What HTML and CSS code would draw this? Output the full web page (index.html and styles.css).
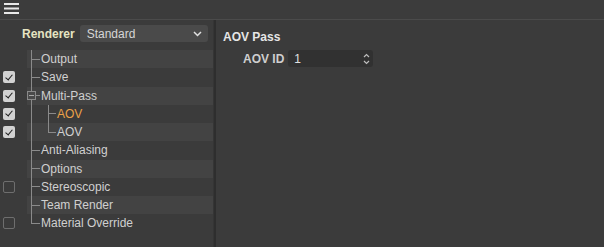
FILE: index.html
```html
<!DOCTYPE html>
<html>
<head>
<meta charset="utf-8">
<link rel="stylesheet" href="styles.css">
</head>
<body>
<div class="topbar">
  <svg class="menu" width="15" height="11" viewBox="0 0 15 11"><rect x="0" y="0" width="15" height="2" fill="#e8e8e8"/><rect x="0" y="4.5" width="15" height="2" fill="#e8e8e8"/><rect x="0" y="9" width="15" height="2" fill="#e8e8e8"/></svg>
</div>
<div class="main">
  <div class="left">
    <div class="renderer">
      <span class="rlabel">Renderer</span>
      <div class="select"><span>Standard</span>
        <svg width="9" height="6" viewBox="0 0 9 6"><path d="M1 1 L4.5 4.5 L8 1" stroke="#e0e0e0" stroke-width="1.5" fill="none"/></svg>
      </div>
    </div>
    <div class="tree">
      <div class="vline"></div>
      <div class="row band"><span class="cb none"></span><span class="tick"></span><span class="label">Output</span></div>
      <div class="row"><span class="cb on"></span><span class="tick"></span><span class="label">Save</span></div>
      <div class="row band"><span class="cb on"></span><span class="expander"></span><span class="tick short"></span><span class="label">Multi-Pass</span></div>
      <div class="row child"><span class="cb on"></span><span class="cvline"></span><span class="tick"></span><span class="label orange">AOV</span></div>
      <div class="row band child last"><span class="cb on"></span><span class="cvline"></span><span class="tick"></span><span class="label">AOV</span></div>
      <div class="row"><span class="cb none"></span><span class="tick"></span><span class="label">Anti-Aliasing</span></div>
      <div class="row band"><span class="cb none"></span><span class="tick"></span><span class="label">Options</span></div>
      <div class="row"><span class="cb off"></span><span class="tick"></span><span class="label">Stereoscopic</span></div>
      <div class="row band"><span class="cb none"></span><span class="tick"></span><span class="label">Team Render</span></div>
      <div class="row"><span class="cb off"></span><span class="tick"></span><span class="label">Material Override</span></div>
    </div>
  </div>
  <div class="divider"></div>
  <div class="right">
    <div class="title">AOV Pass</div>
    <div class="field">
      <span class="flabel">AOV ID</span>
      <div class="input"><span>1</span>
        <svg width="7" height="12" viewBox="0 0 7 12"><path d="M1 4 L3.5 1.5 L6 4" stroke="#bdbdbd" stroke-width="1.2" fill="none"/><path d="M1 8 L3.5 10.5 L6 8" stroke="#bdbdbd" stroke-width="1.2" fill="none"/></svg>
      </div>
    </div>
  </div>
</div>
</body>
</html>
```

FILE: styles.css
```css
html, body {
  margin: 0;
  padding: 0;
  background: #3b3b3b;
  font-family: "Liberation Sans", Arial, sans-serif;
  font-size: 12px;
  color: #d0d0d0;
  width: 604px;
  height: 247px;
  overflow: hidden;
}
.topbar {
  height: 19px;
  border-bottom: 1px solid #4b4b4b;
  background: #3c3c3c;
  display: flex;
  align-items: flex-start;
  padding-left: 4px;
}
.menu { margin-top: 3px; }
.main {
  display: flex;
  height: 227px;
}
.left {
  width: 213px;
  display: flex;
  flex-direction: column;
}
.renderer {
  display: flex;
  align-items: center;
  height: 17px;
  margin-top: 5px;
  padding-left: 22px;
  gap: 5px;
}
.rlabel {
  font-weight: bold;
  color: #e6e4c2;
}
.select {
  width: 128px;
  height: 17px;
  background: #4a4a4a;
  border-radius: 3px;
  display: flex;
  align-items: center;
  justify-content: space-between;
  padding: 0 6px 0 7px;
  box-sizing: border-box;
  color: #d6d6d6;
}
.tree {
  position: relative;
  margin-top: 8px;
}
.vline {
  position: absolute;
  left: 31px;
  top: 0;
  height: 173px;
  width: 1px;
  background: #8a8a8a;
  z-index: 2;
}
.row {
  position: relative;
  height: 18.25px;
  display: flex;
  align-items: center;
}
.row.band::before {
  content: "";
  position: absolute;
  left: 27px;
  right: 0;
  top: 0;
  bottom: 0;
  background: #434343;
  z-index: 0;
}
.row > * { position: relative; z-index: 1; }
.cb {
  width: 12px;
  height: 12px;
  margin-left: 3px;
  box-sizing: border-box;
  border-radius: 2px;
  flex: none;
}
.cb.none { visibility: hidden; }
.cb.off { border: 1px solid #6e6e6e; }
.cb.on { background: #d2d2d2; }
.cb.on::after {
  content: "";
  position: absolute;
  left: 3.5px;
  top: 1.5px;
  width: 3px;
  height: 6px;
  border: solid #1e1e1e;
  border-width: 0 1.6px 1.6px 0;
  transform: rotate(40deg);
}
.tick {
  width: 9px;
  height: 1px;
  background: #8a8a8a;
  margin-left: 16px;
  flex: none;
}
.tick.short { width: 4px; margin-left: 0; }
.label { margin-left: 1px; white-space: nowrap; }
.orange { color: #eba148; }
.expander {
  width: 9px;
  height: 9px;
  box-sizing: border-box;
  border: 1px solid #8a8a8a;
  margin-left: 12px;
  background: #4a4a4a;
  flex: none;
  z-index: 3 !important;
}
.expander::after {
  content: "";
  position: absolute;
  left: 1px;
  right: 1px;
  top: 3px;
  height: 1px;
  background: #a8a8a8;
}
.child .tick { margin-left: 33px; width: 8px; }
.cvline {
  position: absolute !important;
  left: 48px;
  top: 0;
  width: 1px;
  height: 100%;
  background: #8a8a8a;
}
.child.last .cvline { height: 50%; }
.divider {
  width: 2px;
  background: #2e2e2e;
  border-left: 1px solid #353535;
}
.right {
  flex: 1;
  padding-left: 7px;
}
.title {
  font-weight: bold;
  color: #e6e6e6;
  margin-top: 10px;
}
.field {
  display: flex;
  align-items: center;
  margin-top: 6px;
  padding-left: 20px;
  gap: 4px;
}
.flabel {
  font-weight: bold;
  color: #cfcfcf;
}
.input {
  width: 85px;
  height: 17px;
  background: #313131;
  border-radius: 3px;
  display: flex;
  align-items: center;
  justify-content: space-between;
  padding: 0 3px 0 6px;
  box-sizing: border-box;
  color: #e0e0e0;
}
```
